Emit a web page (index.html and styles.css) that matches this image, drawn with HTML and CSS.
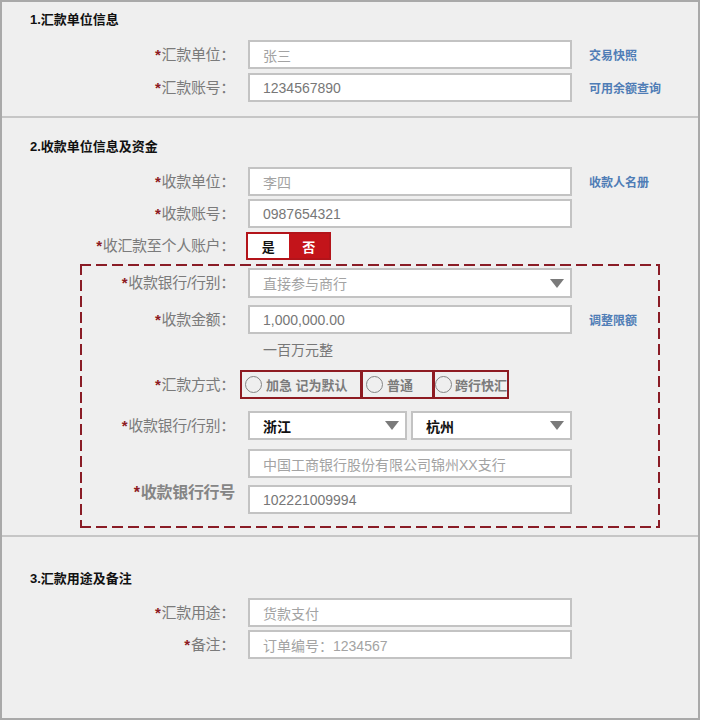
FILE: index.html
```html
<!DOCTYPE html>
<html lang="zh-CN">
<head>
    <meta charset="UTF-8">
    <title>汇款</title>
    <link rel="stylesheet" href="styles.css">
</head>
<body>
    <div class="panel">
        <!-- 1. 汇款单位 -->
        <section class="sec sec-1">
            <h3 class="sec-title">1.汇款单位信息</h3>
            <div class="row">
                <label class="lbl"><span class="req">*</span>汇款单位：</label>
                <div class="field muted">张三</div>
                <a class="link">交易快照</a>
            </div>
            <div class="row gap-4">
                <label class="lbl"><span class="req">*</span>汇款账号：</label>
                <div class="field">1234567890</div>
                <a class="link">可用余额查询</a>
            </div>
        </section>

        <!-- 2. 收款单位 -->
        <section class="sec sec-2">
            <h3 class="sec-title">2.收款单位信息及资金</h3>
            <div class="row">
                <label class="lbl"><span class="req">*</span>收款单位：</label>
                <div class="field muted">李四</div>
                <a class="link">收款人名册</a>
            </div>
            <div class="row gap-3">
                <label class="lbl"><span class="req">*</span>收款账号：</label>
                <div class="field">0987654321</div>
            </div>
            <div class="row gap-4">
                <label class="lbl"><span class="req">*</span>收汇款至个人账户：</label>
                <div class="toggle">
                    <span class="toggle-opt">是</span>
                    <span class="toggle-opt on">否</span>
                </div>
            </div>

            <div class="dash-box">
                <div class="row">
                    <label class="lbl"><span class="req">*</span>收款银行/行别：</label>
                    <div class="field select muted">直接参与商行<svg class="arrow" width="14" height="9" viewBox="0 0 14 9"><path d="M0 0H14L7 9Z"/></svg></div>
                </div>
                <div class="row gap-7">
                    <label class="lbl"><span class="req">*</span>收款金额：</label>
                    <div class="field">1,000,000.00</div>
                    <a class="link">调整限额</a>
                </div>
                <div class="row gap-7">
                    <span class="lbl"></span>
                    <div class="amount-words">一百万元整</div>
                </div>
                <div class="row gap-11">
                    <label class="lbl"><span class="req">*</span>汇款方式：</label>
                    <div class="radios">
                        <span class="radio r1"><i class="dot"></i>加急 记为默认</span>
                        <span class="radio r2"><i class="dot"></i>普通</span>
                        <span class="radio r3"><i class="dot"></i>跨行快汇</span>
                    </div>
                </div>
                <div class="row gap-12">
                    <label class="lbl"><span class="req">*</span>收款银行/行别：</label>
                    <div class="selects">
                        <div class="field select strong s-prov">浙江<svg class="arrow" width="14" height="9" viewBox="0 0 14 9"><path d="M0 0H14L7 9Z"/></svg></div>
                        <div class="field select strong s-city">杭州<svg class="arrow" width="14" height="9" viewBox="0 0 14 9"><path d="M0 0H14L7 9Z"/></svg></div>
                    </div>
                </div>
                <div class="row gap-9">
                    <span class="lbl"></span>
                    <div class="field muted">中国工商银行股份有限公司锦州XX支行</div>
                </div>
                <div class="row gap-7 top">
                    <label class="lbl lbl-high"><span class="req">*</span>收款银行行号</label>
                    <div class="field">102221009994</div>
                </div>
            </div>
        </section>

        <!-- 3. 用途 -->
        <section class="sec sec-3">
            <h3 class="sec-title">3.汇款用途及备注</h3>
            <div class="row">
                <label class="lbl"><span class="req">*</span>汇款用途：</label>
                <div class="field muted">货款支付</div>
            </div>
            <div class="row gap-3">
                <label class="lbl"><span class="req">*</span>备注：</label>
                <div class="field muted">订单编号：1234567</div>
            </div>
        </section>
    </div>
</body>
</html>
```

FILE: styles.css
```css
body {
    margin: 0;
    background-color: #ffffff;
    font-family: "Liberation Sans", "Noto Sans CJK SC", sans-serif;
}
.panel {
    width: 700px;
    height: 720px;
    box-sizing: border-box;
    border: 2px solid #a9a9a9;
    background-color: #efefef;
    display: flex;
    flex-direction: column;
}
.sec {
    display: flex;
    flex-direction: column;
}
.sec-1 {
    padding: 8px 0 14px;
}
.sec-2 {
    border-top: 2px solid #c6c6c6;
    padding: 19px 0 7px;
}
.sec-3 {
    border-top: 2px solid #c6c6c6;
    padding: 32px 0 0;
    flex: 1;
}
.sec-title {
    margin: 0 0 10px 28px;
    font-size: 13px;
    line-height: 20px;
    font-weight: bold;
    color: #111;
}
.sec-3 .sec-title {
    margin-bottom: 9px;
}

.row {
    display: flex;
    align-items: center;
}
.row.top {
    align-items: flex-start;
}
.gap-3 { margin-top: 3px; }
.gap-4 { margin-top: 4px; }
.gap-7 { margin-top: 7px; }
.gap-9 { margin-top: 9px; }
.gap-11 { margin-top: 11px; }
.gap-12 { margin-top: 12px; }

.lbl {
    width: 233px;
    flex: none;
    margin-right: 13px;
    text-align: right;
    font-size: 15px;
    line-height: 20px;
    color: #7b7b7b;
    white-space: nowrap;
    letter-spacing: -0.3px;
}
.lbl-high {
    margin-top: -2px;
    font-size: 16px;
    font-weight: bold;
    color: #858585;
}
.req {
    color: #8e1b22;
    font-weight: bold;
    margin-right: 1px;
}

.field {
    width: 324px;
    height: 29px;
    box-sizing: border-box;
    border: 2px solid #c3c3c3;
    background-color: #ffffff;
    padding: 0 0 0 13px;
    display: flex;
    align-items: center;
    font-size: 14px;
    color: #777;
    white-space: nowrap;
}
.field.muted {
    color: #a3a3a3;
}
.field.strong {
    color: #111;
    font-weight: bold;
}
.select .arrow {
    margin-left: auto;
    margin-right: 6px;
    fill: #7a7a7a;
}
.dash-box .row:first-child .field {
    height: 30px;
}

.link {
    margin-left: 17px;
    font-size: 12px;
    font-weight: bold;
    color: #4f7db6;
    cursor: pointer;
}

.toggle {
    margin-left: -2px;
    display: flex;
    width: 85px;
    height: 28px;
    box-sizing: border-box;
    border: 2px solid #b3141a;
}
.toggle-opt {
    flex: 1;
    display: flex;
    align-items: center;
    justify-content: center;
    font-size: 13px;
    font-weight: bold;
    background-color: #ffffff;
    color: #111;
}
.toggle-opt.on {
    background-color: #c3141a;
    color: #ffffff;
}

.dash-box {
    margin: 4px 0 0 78px;
    width: 580px;
    box-sizing: border-box;
    padding: 4px 2px 14px;
    background:
        repeating-linear-gradient(90deg, #8a1c26 0 11px, transparent 11px 16px) left top / 100% 2px no-repeat,
        repeating-linear-gradient(90deg, #8a1c26 0 11px, transparent 11px 16px) left bottom / 100% 2px no-repeat,
        repeating-linear-gradient(180deg, #8a1c26 0 11px, transparent 11px 16px) left top / 2px 100% no-repeat,
        repeating-linear-gradient(180deg, #8a1c26 0 11px, transparent 11px 16px) right top / 2px 100% no-repeat;
}
.dash-box .lbl {
    width: 153px;
}

.amount-words {
    padding-left: 15px;
    font-size: 14px;
    line-height: 18px;
    color: #777;
}

.radios {
    display: flex;
    margin-left: -8px;
}
.radio {
    height: 29px;
    box-sizing: border-box;
    border: 2px solid #8e1b22;
    display: flex;
    align-items: center;
    padding-left: 3px;
    font-size: 13px;
    font-weight: bold;
    color: #7b7b7b;
    white-space: nowrap;
    overflow: hidden;
}
.radio + .radio {
    margin-left: -1px;
}
.r1 { width: 122px; }
.r2 { width: 73px; }
.r3 { width: 76px; padding-left: 0; }
.dot {
    width: 17px;
    height: 17px;
    box-sizing: border-box;
    border: 1.5px solid #858585;
    border-radius: 50%;
    margin-right: 4px;
    flex: none;
}
.r3 .dot {
    margin-right: 3px;
}

.selects {
    display: flex;
    gap: 4px;
}
.s-prov { width: 159px; }
.s-city { width: 161px; }
```
